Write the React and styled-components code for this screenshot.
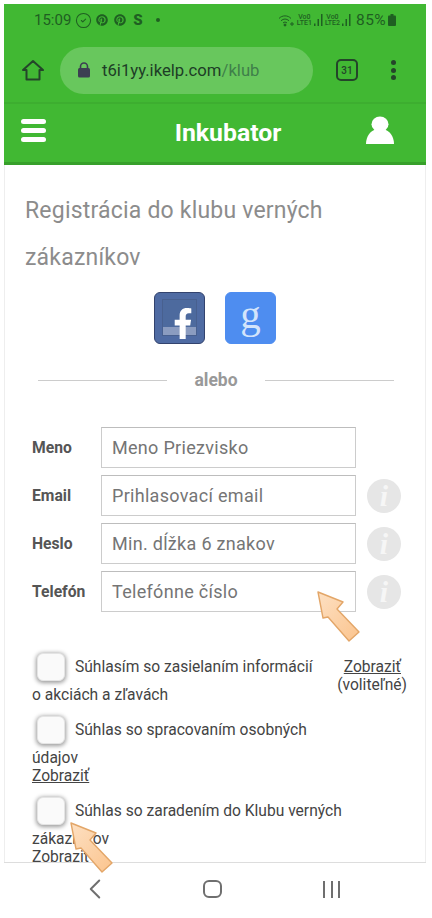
import React from "react"
import styled, { createGlobalStyle } from "styled-components"
import { FaPinterest, FaFacebookF } from "react-icons/fa"
import { ChevronLeft, CircleCheck } from "lucide-react"

const GlobalStyle = createGlobalStyle`
    html, body {
        margin: 0;
        padding: 0;
        background: #fff;
    }
    body {
        font-family: Roboto, "Noto Sans", sans-serif;
        overflow: hidden;
    }
`

const Page = styled.div`
    position: relative;
    width: 432px;
    height: 918px;
    padding: 4px 6px 0 4px;
    box-sizing: border-box;
    overflow: hidden;
    display: flex;
    flex-direction: column;
`

const Green = styled.header`
    background: #41b833;
    flex: none;
`

const StatusBar = styled.div`
    height: 32px;
    padding: 0 30px 2px 30px;
    display: flex;
    align-items: center;
    justify-content: space-between;
    color: #1f5f22;
`

const StatusGroup = styled.div`
    display: flex;
    align-items: center;
    gap: ${p => p.gap || 4}px;
`

const Clock = styled.span`
    font-size: 15px;
`

const Skype = styled.span`
    font-size: 15px;
    font-weight: 900;
    margin: 0 9px 0 3px;
`

const Dot = styled.span`
    width: 4px;
    height: 4px;
    border-radius: 50%;
    background: #1f5f22;
`

const Lte = styled.span`
    font-size: 7px;
    line-height: 6.5px;
    text-align: center;
    font-weight: 500;
`

const Percent = styled.span`
    font-size: 15.5px;
    letter-spacing: 0.4px;
    margin-left: 3px;
`

const BrowserBar = styled.div`
    height: 64px;
    padding: 0 23px 0 16px;
    display: flex;
    align-items: center;
    border-bottom: 2px solid #3dae30;
`

const HomeButton = styled.div`
    width: 26px;
    height: 26px;
    display: flex;
    align-items: center;
    justify-content: center;
`

const Address = styled.div`
    width: 253px;
    height: 47px;
    margin-left: 14px;
    padding-left: 17px;
    box-sizing: border-box;
    border-radius: 24px;
    background: #68c75d;
    display: flex;
    align-items: center;
    gap: 11px;
    font-size: 16.7px;
    color: #1d3d26;
`

const Path = styled.span`
    color: #3f7f4a;
`

const TabCount = styled.div`
    width: 18px;
    height: 18px;
    margin-left: 23px;
    border: 2px solid #24452a;
    border-radius: 5px;
    color: #24452a;
    font-size: 10px;
    font-weight: 500;
    display: flex;
    align-items: center;
    justify-content: center;
`

const MoreDots = styled.div`
    margin-left: 33px;
    display: flex;
    flex-direction: column;
    gap: 2.5px;
`

const MoreDot = styled.span`
    width: 5px;
    height: 5px;
    border-radius: 50%;
    background: #24452a;
`

const NavBar = styled.div`
    height: 58px;
    padding: 0 32px 0 17px;
    border-bottom: 3px solid #37a02b;
    display: flex;
    align-items: center;
    justify-content: space-between;
    color: #fff;
`

const Burger = styled.div`
    width: 25px;
    display: flex;
    flex-direction: column;
    gap: 4px;
    margin-top: -6px;
`

const BurgerLine = styled.span`
    height: 5px;
    border-radius: 2.5px;
    background: #fff;
`

const Brand = styled.div`
    font-size: 24.8px;
    font-weight: 700;
    margin: -1px 0 0 44px;
`

const UserIcon = styled.svg`
    margin-top: -6px;
`

const Content = styled.main`
    flex: 1;
    min-height: 0;
    overflow: hidden;
    border: solid #eee;
    border-width: 0 1px;
    padding: 22px 18px 0 20px;
`

const Title = styled.h1`
    margin: 0;
    font-size: 23px;
    font-weight: 400;
    line-height: 47px;
    letter-spacing: 0.2px;
    color: #8c8c8c;
`

const Socials = styled.div`
    margin-top: 11px;
    padding-right: 2px;
    display: flex;
    justify-content: center;
    gap: 20px;
`

const SocialButton = styled.div`
    position: relative;
    width: 51px;
    height: 52px;
    box-sizing: border-box;
    border-radius: 6px;
    display: flex;
    align-items: center;
    justify-content: center;
    overflow: hidden;
    background: ${p => p.$bg};
    border: 1px solid ${p => p.$edge};
`

const FacebookInner = styled.div`
    position: absolute;
    inset: 6px 7px 7px 7px;
    border: 1px solid #48608f;
    background: linear-gradient(#4d6a9e 0 76%, #8b9cc0 76%);
`

const FacebookGlyph = styled(FaFacebookF)`
    position: relative;
    width: 20px;
    height: 31px;
    margin: 11px 0 0 6px;
    color: #fff;
`

const GoogleGlyph = styled.span`
    font-family: "Liberation Serif", serif;
    font-size: 41px;
    line-height: 41px;
    margin-top: -8px;
    color: #d3e4fb;
`

const Divider = styled.div`
    margin: 26px 13px 0 13px;
    display: flex;
    align-items: center;
    gap: 27px;
    font-size: 17.5px;
    font-weight: 700;
    color: #999;
`

const DividerLine = styled.span`
    flex: 1;
    height: 1px;
    background: #ccc;
`

const Form = styled.div`
    margin-top: 37px;
    display: flex;
    flex-direction: column;
    gap: 7px;
`

const Row = styled.div`
    display: flex;
    align-items: center;
`

const Label = styled.label`
    width: 69px;
    margin-left: 7px;
    font-size: 15.7px;
    font-weight: 700;
    color: #555;
`

const Field = styled.div`
    width: 255px;
    height: 41px;
    box-sizing: border-box;
    padding-left: 10px;
    border: 1px solid #ccc;
    border-top-color: #bdbdbd;
    display: flex;
    align-items: center;
    font-size: 18px;
    letter-spacing: 0.3px;
    color: #757575;
`

const InfoBadge = styled.div`
    width: 34px;
    height: 34px;
    margin-left: 11px;
    border-radius: 50%;
    background: #e6e6e6;
    color: #f6f6f6;
    font-family: "Liberation Serif", serif;
    font-size: 30px;
    font-style: italic;
    font-weight: 700;
    line-height: 34px;
    text-align: center;
`

const Consents = styled.div`
    margin-top: 40px;
    padding-left: 7px;
    font-size: 15.6px;
    color: #444;
`

const Consent = styled.div`
    margin-bottom: 11px;
`

const ConsentLine = styled.div`
    height: 29px;
    display: flex;
    align-items: center;
`

const Box = styled.span`
    width: 26px;
    height: 26px;
    margin: 0 10px 0 5px;
    flex: none;
    border: 1px solid #e4e4e4;
    border-radius: 6px;
    background: #fafafa;
    box-shadow: 0 1px 4px 1px #9c9c9c;
`

const Wrapped = styled.div`
    line-height: 18px;
    padding-top: 5px;
`

const Show = styled.a`
    color: #444;
    text-decoration: underline;
`

const Aside = styled.div`
    float: right;
    width: 74px;
    margin-top: 6px;
    text-align: right;
    line-height: 18px;
`

const AsideShow = styled(Show)`
    display: block;
    padding-right: 6px;
`

const BottomBar = styled.nav`
    height: 52px;
    flex: none;
    border-top: 1px solid #ddd;
    background: #fff;
    color: #6f6f6f;
    padding: 0 0 3px 74px;
    display: flex;
    align-items: center;
`

const Square = styled.span`
    width: 15px;
    height: 14px;
    margin-left: 91px;
    border: 2px solid #6f6f6f;
    border-radius: 6px;
`

const Bars = styled.span`
    margin-left: 101px;
    display: flex;
    gap: 5.5px;
`

const Bar = styled.span`
    width: 2px;
    height: 17px;
    background: #6f6f6f;
`

const ArrowSvg = styled.svg`
    position: absolute;
    left: ${p => p.$x}px;
    top: ${p => p.$y}px;
    z-index: 2;
`

const Arrow = ({ x, y }) => (
    <ArrowSvg $x={x} $y={y} width="50" height="58" viewBox="0 0 50 58">
        <defs>
            <linearGradient id="arrowFill" x1="0" y1="0" x2="1" y2="1">
                <stop offset="0" stopColor="#fde0c2" />
                <stop offset="1" stopColor="#fbc48e" />
            </linearGradient>
        </defs>
        <path
            d="M2 2 L27 12 L21 19 L43 42 L33 51 L12 27 L7 28 Z"
            fill="url(#arrowFill)"
            stroke="#e3a668"
            strokeWidth="1.4"
            strokeLinejoin="round"
        />
    </ArrowSvg>
)

const HouseIcon = () => (
    <svg width="22" height="22" viewBox="0 0 22 22" fill="none" stroke="#24452a" strokeWidth="2" strokeLinejoin="round">
        <path d="M1 11 L11 2 L21 11 H17.5 V20.5 H4.5 V11 Z" />
    </svg>
)

const Wifi = () => (
    <svg width="17" height="13" viewBox="0 0 17 13" fill="none" stroke="#1f5f22" strokeWidth="1">
        <path d="M1 4.5 C4 1 10 1 13 4.5" />
        <path d="M3 6.8 C5.5 4.5 8.5 4.5 11 6.8" />
        <path d="M5 9 C6.3 7.8 7.7 7.8 9 9" />
        <circle cx="7" cy="11" r="1" fill="#1f5f22" />
        <path d="M12 10 h4 M14 8 v4" />
    </svg>
)

const Signal = () => (
    <svg width="9" height="12" viewBox="0 0 9 12" fill="#1f5f22">
        <rect x="0" y="9.5" width="1.5" height="2.5" />
        <rect x="3.5" y="5" width="1.5" height="7" />
        <rect x="7" y="0" width="1.5" height="12" />
    </svg>
)

const Battery = () => (
    <svg width="8" height="12" viewBox="0 0 8 12" fill="#1f5f22">
        <rect x="2.5" y="0" width="3" height="2" />
        <rect x="0" y="1.5" width="8" height="10.5" rx="1" />
    </svg>
)

const Lock = () => (
    <svg width="14" height="16" viewBox="0 0 14 16">
        <path d="M3.5 7 V4.5 a3.5 3.5 0 0 1 7 0 V7" fill="none" stroke="#3c3f52" strokeWidth="1.6" />
        <rect x="1" y="6" width="12" height="9.5" rx="1.5" fill="#3c3f52" />
    </svg>
)

const User = () => (
    <UserIcon width="28" height="28" viewBox="0 0 28 31" fill="#fff" preserveAspectRatio="none">
        <circle cx="14" cy="9" r="8.5" />
        <path d="M0 31 C0 22 5 16 10 15 h8 C23 16 28 22 28 31 Z" />
    </UserIcon>
)

const fields = [
    { label: "Meno", hint: "Meno Priezvisko" },
    { label: "Email", hint: "Prihlasovací email", info: true },
    { label: "Heslo", hint: "Min. dĺžka 6 znakov", info: true },
    { label: "Telefón", hint: "Telefónne číslo", info: true },
]

const App = () => (
    <Page>
        <GlobalStyle />
        <Green>
            <StatusBar>
                <StatusGroup>
                    <Clock>15:09</Clock>
                    <CircleCheck size={17} strokeWidth={1.5} />
                    <FaPinterest size={12} />
                    <FaPinterest size={12} style={{ marginLeft: 2 }} />
                    <Skype>S</Skype>
                    <Dot />
                </StatusGroup>
                <StatusGroup gap={2}>
                    <Wifi />
                    <Lte>Vo0<br />LTE1</Lte>
                    <Signal />
                    <Lte>Vo0<br />LTE2</Lte>
                    <Signal />
                    <Percent>85%</Percent>
                    <Battery />
                </StatusGroup>
            </StatusBar>
            <BrowserBar>
                <HomeButton><HouseIcon /></HomeButton>
                <Address>
                    <Lock />
                    <span>t6i1yy.ikelp.com<Path>/klub</Path></span>
                </Address>
                <TabCount>31</TabCount>
                <MoreDots><MoreDot /><MoreDot /><MoreDot /></MoreDots>
            </BrowserBar>
            <NavBar>
                <Burger><BurgerLine /><BurgerLine /><BurgerLine /></Burger>
                <Brand>Inkubator</Brand>
                <User />
            </NavBar>
        </Green>
        <Content>
            <Title>Registrácia do klubu verných zákazníkov</Title>
            <Socials>
                <SocialButton $bg="#4f6ba3" $edge="#33436e">
                    <FacebookInner />
                    <FacebookGlyph />
                </SocialButton>
                <SocialButton $bg="#4e8df0" $edge="#4e8df0">
                    <GoogleGlyph>g</GoogleGlyph>
                </SocialButton>
            </Socials>
            <Divider><DividerLine />alebo<DividerLine /></Divider>
            <Form>
                {fields.map(f => (
                    <Row key={f.label}>
                        <Label>{f.label}</Label>
                        <Field>{f.hint}</Field>
                        {f.info && <InfoBadge>i</InfoBadge>}
                    </Row>
                ))}
            </Form>
            <Consents>
                <Aside>
                    <AsideShow>Zobraziť</AsideShow>
                    (voliteľné)
                </Aside>
                <Consent>
                    <ConsentLine><Box />Súhlasím so zasielaním informácií</ConsentLine>
                    <Wrapped>o akciách a zľavách</Wrapped>
                </Consent>
                <Consent>
                    <ConsentLine><Box />Súhlas so spracovaním osobných</ConsentLine>
                    <Wrapped>údajov<br /><Show>Zobraziť</Show></Wrapped>
                </Consent>
                <Consent>
                    <ConsentLine><Box />Súhlas so zaradením do Klubu verných</ConsentLine>
                    <Wrapped>zákazníkov<br /><Show>Zobraziť</Show></Wrapped>
                </Consent>
            </Consents>
        </Content>
        <BottomBar>
            <ChevronLeft size={34} strokeWidth={1.4} />
            <Square />
            <Bars><Bar /><Bar /><Bar /></Bars>
        </BottomBar>
        <Arrow x={316} y={590} />
        <Arrow x={69} y={821} />
    </Page>
)

export default App
